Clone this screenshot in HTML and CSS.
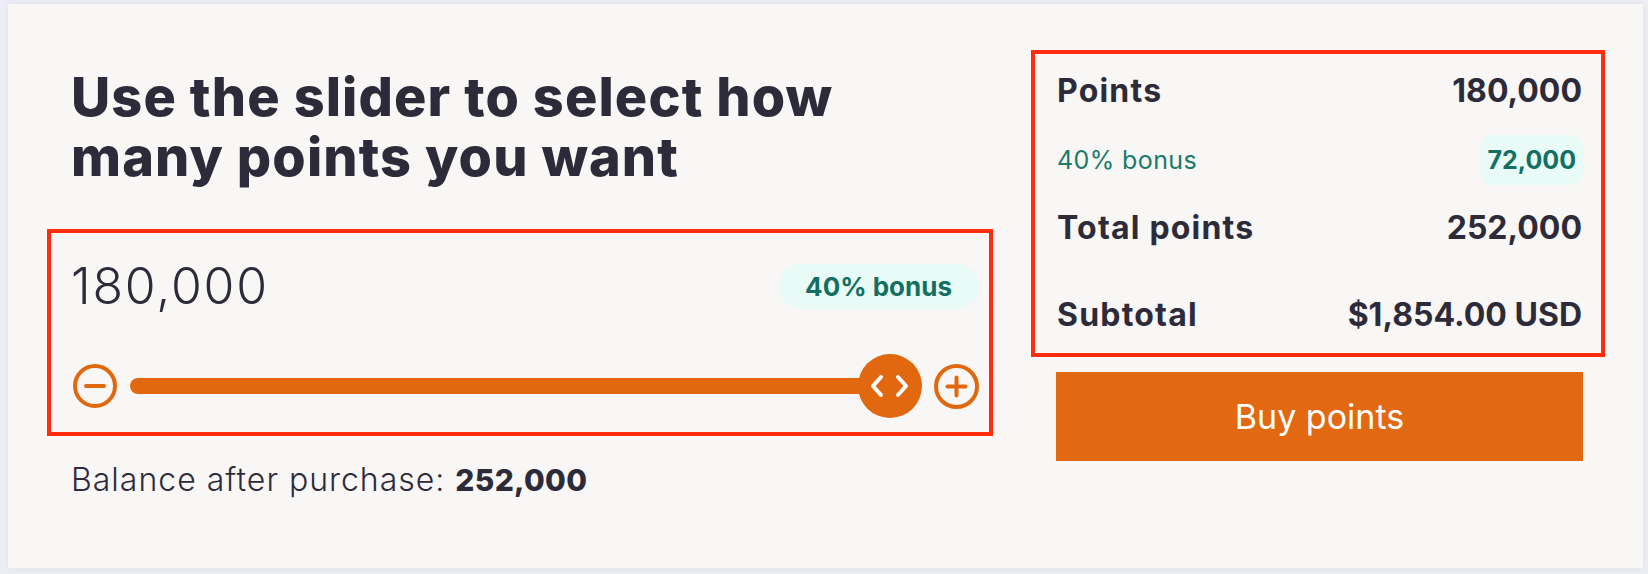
FILE: index.html
```html
<!DOCTYPE html>
<html lang="en">
<head>
<meta charset="utf-8">
<title>Buy points</title>
<link rel="stylesheet" href="styles.css">
</head>
<body>
<main class="card">
  <section class="left">
    <h1 class="title">Use the slider to select how many points you want</h1>
    <div class="slider-box">
      <div class="amount-row">
        <span class="amount">180,000</span>
        <span class="bonus-pill">40% bonus</span>
      </div>
      <div class="slider-row">
        <button class="step" aria-label="Decrease">
          <svg width="44" height="44" viewBox="0 0 44 44"><circle cx="22" cy="22" r="20" fill="none" stroke="#e2680f" stroke-width="4"/><line x1="13" y1="22" x2="31" y2="22" stroke="#e2680f" stroke-width="4" stroke-linecap="round"/></svg>
        </button>
        <div class="track">
          <div class="bar"></div>
          <div class="thumb">
            <svg width="64" height="64" viewBox="0 0 64 64"><path d="M23 23 L15 32 L23 41" fill="none" stroke="#fff" stroke-width="4" stroke-linecap="round" stroke-linejoin="round"/><path d="M40 23 L48 32 L40 41" fill="none" stroke="#fff" stroke-width="4" stroke-linecap="round" stroke-linejoin="round"/></svg>
          </div>
        </div>
        <button class="step" aria-label="Increase">
          <svg width="45" height="45" viewBox="0 0 45 45"><circle cx="22.5" cy="22.5" r="20.5" fill="none" stroke="#e2680f" stroke-width="4"/><line x1="13.5" y1="22.5" x2="31.5" y2="22.5" stroke="#e2680f" stroke-width="4" stroke-linecap="round"/><line x1="22.5" y1="13.5" x2="22.5" y2="31.5" stroke="#e2680f" stroke-width="4" stroke-linecap="round"/></svg>
        </button>
      </div>
    </div>
    <p class="balance">Balance after purchase: <strong>252,000</strong></p>
  </section>
  <aside class="right">
    <div class="summary">
      <div class="row"><span class="label">Points</span><span class="value">180,000</span></div>
      <div class="row bonus-row"><span class="bonus-label">40% bonus</span><span class="bonus-value">72,000</span></div>
      <div class="row"><span class="label">Total points</span><span class="value">252,000</span></div>
      <div class="row subtotal"><span class="label">Subtotal</span><span class="value">$1,854.00 USD</span></div>
    </div>
    <button class="buy">Buy points</button>
  </aside>
</main>
</body>
</html>
```
FILE: styles.css
```css
* { box-sizing: border-box; }
html, body { margin: 0; padding: 0; }
body {
  background: #edeef5;
  font-family: "Inter", "Liberation Sans", sans-serif;
  color: #2d2b3a;
  padding: 4px 0 0 8px;
  width: 1648px;
  height: 574px;
  overflow: hidden;
}
.card {
  width: 1635px;
  height: 564px;
  background: #f8f7f5;
  box-shadow: 0 0 6px rgba(60, 60, 120, 0.08);
  display: flex;
  gap: 38px;
  padding: 0 38px 0 39px;
}
.left {
  width: 946px;
  flex: none;
  padding-top: 63px;
}
.title {
  margin: 0 0 42px 24px;
  max-width: 800px;
  font-size: 54px;
  line-height: 60px;
  font-weight: 800;
  letter-spacing: 1.1px;
  color: #2d2b3a;
}
.slider-box {
  border: 4px solid #ff2d0d;
  height: 207px;
  padding: 25px 10px 0 22px;
}
.amount-row {
  height: 56px;
  display: flex;
  align-items: center;
  justify-content: space-between;
}
.amount {
  font-size: 50px;
  line-height: 56px;
  font-weight: 300;
  letter-spacing: 1.8px;
  margin-left: -2px;
}
.bonus-pill {
  height: 45px;
  line-height: 45px;
  padding: 0 27px;
  border-radius: 23px;
  background: #e8fbf7;
  color: #136f63;
  font-size: 26px;
  font-weight: 700;
}
.slider-row {
  margin-top: 40px;
  height: 64px;
  display: flex;
  align-items: center;
}
.step {
  flex: none;
  padding: 0;
  margin: 0;
  border: 0;
  background: none;
  display: flex;
}
.track {
  flex: 1;
  display: flex;
  align-items: center;
  margin: 0 12px 0 13px;
}
.bar {
  flex: 1;
  height: 16px;
  border-radius: 8px;
  background: #e2680f;
}
.thumb {
  flex: none;
  width: 64px;
  height: 64px;
  margin-left: -32px;
  border-radius: 50%;
  background: #e2680f;
  display: flex;
}
.balance {
  margin: 24px 0 0 24px;
  font-size: 32px;
  line-height: 40px;
  font-weight: 300;
  letter-spacing: 1px;
}
.balance strong {
  font-size: 30px;
  font-weight: 800;
  letter-spacing: 0.3px;
}
.right {
  width: 574px;
  flex: none;
  padding-top: 46px;
}
.summary {
  border: 4px solid #ff2d0d;
  height: 307px;
  padding: 17px 19px 0 22px;
  display: flex;
  flex-direction: column;
  gap: 23.5px;
}
.row {
  display: flex;
  justify-content: space-between;
  align-items: center;
  height: 40px;
}
.label {
  font-size: 32px;
  line-height: 40px;
  font-weight: 700;
  letter-spacing: 1.2px;
}
.value {
  font-size: 32px;
  line-height: 40px;
  font-weight: 700;
}
.bonus-row { height: 50px; }
.bonus-label {
  font-size: 25px;
  font-weight: 400;
  letter-spacing: 0.4px;
  color: #1b7a6c;
}
.bonus-value {
  height: 50px;
  line-height: 50px;
  padding: 0 7px 0 8px;
  margin-right: -1px;
  border-radius: 12px;
  background: #e8fbf7;
  color: #136f63;
  font-size: 25px;
  font-weight: 700;
}
.subtotal { margin-top: 23.5px; }
.buy {
  display: block;
  margin: 15px 22px 0 25px;
  width: 527px;
  height: 89px;
  border: 0;
  background: #e26812;
  color: #fff;
  font-family: "Inter", "Liberation Sans", sans-serif;
  font-size: 34px;
  font-weight: 400;
  cursor: pointer;
}
```
